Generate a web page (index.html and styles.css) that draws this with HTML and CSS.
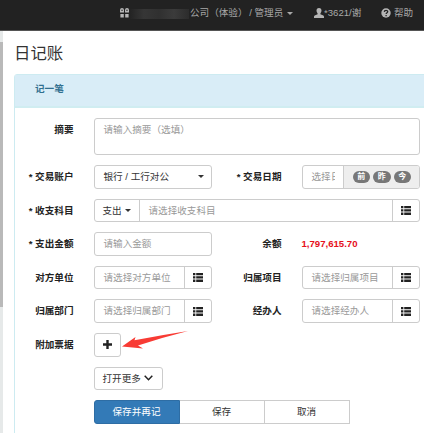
FILE: index.html
```html
<!DOCTYPE html>
<html lang="zh-CN">
<head>
<meta charset="utf-8">
<title>日记账</title>
<link rel="stylesheet" href="styles.css">
</head>
<body>
<svg class="defs" width="0" height="0">
  <symbol id="list" viewBox="0 0 10 9"><path d="M0 0h2.4v2.3H0zM3.2 0H10v2.3H3.2zM0 3.3h2.4v2.3H0zM3.2 3.3H10v2.3H3.2zM0 6.6h2.4v2.3H0zM3.2 6.6H10v2.3H3.2z"/></symbol>
</svg>
<header class="navbar">
  <div class="nav-item company">
    <svg class="gift" width="9" height="10" viewBox="0 0 9 10"><path fill-rule="evenodd" d="M0 2a2 2 0 0 1 4 0v2.500H0zM5 2a2 2 0 0 1 4 0v2.500H5zM1.300 1.700v1h1.500v-1zM6.200 1.700v1h1.500v-1zM.4 6h3.400v3.500H.4zM5.200 6h3.400v3.500H5.200z"/></svg>
    <span class="mask"></span>
    <span>公司</span><span class="trial">（体验）</span><span class="role">/ 管理员</span><i class="caret"></i>
  </div>
  <div class="nav-item user">
    <svg width="10" height="10" viewBox="0 0 10 10"><path d="M5 0c1.700 0 2.600 1.200 2.500 2.800-.1 1.200-.6 2-1.100 2.600v.9L9.300 7.600q.7.400.7 1.100V10H0V8.700q0-.7.7-1.100L3.600 6.300v-.9C3.100 4.800 2.600 4 2.500 2.800 2.400 1.200 3.300 0 5 0z"/></svg>
    <span>*3621/谢</span>
  </div>
  <div class="nav-item help">
    <svg width="10" height="10" viewBox="0 0 10 10"><circle cx="5" cy="5" r="4.700"/><path class="mark" d="M3.300 3.900C3.400 1.800 6.800 1.900 6.700 3.800 6.600 4.800 5.100 4.700 5.100 6.100M5.100 6.900v1.300"/></svg>
    <span>帮助</span>
  </div>
</header>
<div class="page">
  <aside class="scrollbar"><div class="thumb"></div></aside>
  <main>
    <h1>日记账</h1>
    <section class="panel">
      <h2>记一笔</h2>
      <form class="form">
        <div class="row">
          <label>摘要</label>
          <div class="control wide summary">请输入摘要（选填）</div>
        </div>
        <div class="row">
          <label>* 交易账户</label>
          <div class="control select"><span>银行 / 工行对公</span><i class="caret"></i></div>
          <label>* 交易日期</label>
          <div class="control date"><span class="value">选择日期</span><span class="addon"><b>前</b><b>昨</b><b>今</b></span></div>
        </div>
        <div class="row">
          <label>* 收支科目</label>
          <div class="control wide"><span class="kind">支出<i class="caret"></i></span><span class="value">请选择收支科目</span><span class="pick"><svg><use href="#list"/></svg></span></div>
        </div>
        <div class="row">
          <label>* 支出金额</label>
          <div class="control"><span class="value">请输入金额</span></div>
          <label>余额</label>
          <div class="balance">1,797,615.70</div>
        </div>
        <div class="row">
          <label>对方单位</label>
          <div class="control"><span class="value">请选择对方单位</span><span class="pick"><svg><use href="#list"/></svg></span></div>
          <label>归属项目</label>
          <div class="control"><span class="value">请选择归属项目</span><span class="pick"><svg><use href="#list"/></svg></span></div>
        </div>
        <div class="row">
          <label>归属部门</label>
          <div class="control"><span class="value">请选择归属部门</span><span class="pick"><svg><use href="#list"/></svg></span></div>
          <label>经办人</label>
          <div class="control"><span class="value">请选择经办人</span><span class="pick"><svg><use href="#list"/></svg></span></div>
        </div>
        <div class="row">
          <label>附加票据</label>
          <div class="attach">
            <span class="control add"><svg width="9" height="9" viewBox="0 0 9 9"><path d="M3.300 0h2.400v3.300H9v2.400H5.700V9H3.300V5.700H0V3.300h3.300z"/></svg></span>
            <svg class="arrow" width="67" height="20" viewBox="0 0 67 20"><path d="M0 15.500L13.500 6 12.500 9.200Q40 4 66 0 42 6 16 14.500L21 17.500z"/></svg>
          </div>
        </div>
        <div class="row">
          <div class="control more">打开更多<svg width="9" height="6" viewBox="0 0 9 6"><path d="M.7.7l3.800 4 3.800-4"/></svg></div>
        </div>
        <div class="row">
          <div class="actions"><span class="primary">保存并再记</span><span>保存</span><span>取消</span></div>
        </div>
      </form>
    </section>
  </main>
</div>
</body>
</html>
```
FILE: styles.css
```css
* { box-sizing: border-box; }
body {
  margin: 0;
  width: 424px;
  height: 433px;
  overflow: hidden;
  background: #fff;
  color: #333;
  font: 9.6px/14px "Liberation Sans", "Noto Sans CJK SC", sans-serif;
  white-space: nowrap;
}
.defs { display: block; height: 0; }
.navbar {
  display: flex;
  height: 31px;
  padding: 0 0 4px 120px;
  background: #222;
  border-bottom: 1px solid #555;
  color: #a8a8a8;
}
.nav-item { display: flex; align-items: center; }
.nav-item svg { fill: #b5b5b5; flex: none; }
.company { width: 194px; }
.mask {
  width: 60px;
  height: 10px;
  margin: 2px 1px 0 0;
  background: linear-gradient(90deg, #222, #363636 25%, #303030 50%, #3b3b3b 75%, #2c2c2c);
}
.trial { width: 40px; }
.role { width: 35px; }
.company .caret { margin-left: 3px; }
.user { width: 67px; }
.help { gap: 3px; }
.nav-item .mark { fill: none; stroke: #222; stroke-width: 1.3; }
.caret {
  flex: none;
  display: inline-block;
  border: 3px solid transparent;
  border-top-color: currentColor;
  border-bottom: 0;
}
.page { display: flex; height: 402px; }
.scrollbar { flex: none; width: 3px; padding-top: 11px; background: #e6e9e9; }
.thumb { height: 265px; background: #b9b9b9; }
main { flex: 1; min-width: 0; padding: 11px 0 0 11px; }
h1 { margin: 0 0 10px; font-size: 16.4px; line-height: 22px; font-weight: 400; }
.panel {
  width: 430px;
  height: 370px;
  border: 1px solid #cdebf1;
  border-radius: 3px 0 0 0;
}
h2 {
  height: 33px;
  margin: 0;
  padding: 7px 0 0 20px;
  background: #d9edf7;
  border-bottom: 2px solid #d0edf1;
  color: #31708f;
  font-size: 9.6px;
  line-height: 14px;
}
.form { display: flex; flex-direction: column; gap: 10px; padding-top: 10px; }
.row {
  display: grid;
  grid-template-columns: 58.5px 118px 50px 118px;
  column-gap: 20px;
  height: 23.6px;
}
.row:first-child { height: 37px; }
label { text-align: right; font-weight: 700; line-height: 23px; color: #222; }
.control {
  display: flex;
  align-items: stretch;
  border: 1px solid #ccc;
  border-radius: 3px;
  line-height: 21px;
  overflow: hidden;
  background: #fff;
}
.wide { grid-column: 2 / -1; }
.summary { padding-left: 9px; color: #999; }
.select { align-items: center; justify-content: space-between; padding: 0 7px 0 9px; }
.value { flex: 1; min-width: 0; padding-left: 9px; color: #999; overflow: hidden; }
.kind { width: 45px; padding-left: 8px; border-right: 1px solid #ccc; }
.kind .caret { margin-left: 3px; vertical-align: 2px; }
.pick { display: flex; align-items: center; justify-content: center; width: 27px; border-left: 1px solid #ccc; }
.pick svg { width: 10px; height: 9px; fill: #222; }
.date .value { margin-right: 8px; }
.addon {
  display: flex;
  align-items: center;
  gap: 3px;
  width: 76px;
  padding-left: 9px;
  background: #eee;
  border-left: 1px solid #ccc;
}
.addon b {
  width: 17.5px;
  height: 12px;
  border-radius: 6px;
  background: #777;
  color: #fff;
  font-size: 8px;
  line-height: 11px;
  text-align: center;
}
.balance { color: #e60f1b; font-weight: 700; line-height: 24px; }
.attach { display: flex; }
.add { width: 27px; align-items: center; justify-content: center; }
.add svg { fill: #222; }
.arrow { fill: #f83b34; margin-left: 1px; margin-top: -2px; flex: none; }
.more { grid-column: 2; width: 69px; align-items: center; padding-left: 8px; }
.more svg { margin-left: 3px; fill: none; stroke: #222; stroke-width: 1.5; }
.actions { grid-column: 2 / -1; display: flex; line-height: 22px; text-align: center; }
.actions span { width: 85px; border: 1px solid #ccc; border-left: 0; }
.actions .primary { width: 86px; border: 1px solid #2e6da4; border-radius: 3px 0 0 3px; background: #337ab7; color: #fff; }
```
